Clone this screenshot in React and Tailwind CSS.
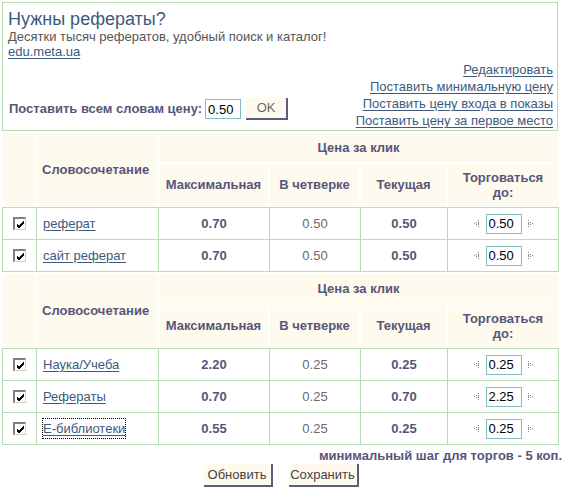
const green = "border-[#b7dbb7]";

function Check() {
  return (
    <span className="inline-flex h-[13px] w-[13px] items-center justify-center border-t-2 border-l-2 border-b border-r border-t-[#808080] border-l-[#808080] border-b-[#d4d0c8] border-r-[#d4d0c8] bg-white">
      <svg width="9" height="9" viewBox="0 0 9 9">
        <path d="M1 4 L3 6 L8 1 M1 5 L3 7 L8 2 M1 6 L3 8 L8 3" stroke="#000" strokeWidth="1" fill="none" />
      </svg>
    </span>
  );
}

function Arrow({ dir }) {
  const dots =
    dir === "left"
      ? [[5, 0], [3, 2], [5, 2], [1, 3], [5, 3], [3, 4], [5, 4], [5, 6]]
      : [[0, 0], [0, 2], [2, 2], [0, 3], [4, 3], [0, 4], [2, 4], [0, 6]];
  return (
    <svg width="6" height="7" viewBox="0 0 6 7">
      {dots.map(([x, y], i) => (
        <rect key={i} x={x} y={y} width="1" height="1" fill="#8a8aa8" />
      ))}
    </svg>
  );
}

function PriceBox({ value }) {
  return (
    <input
      defaultValue={value}
      className="h-[20px] w-[36px] border border-[#7fbfbf] bg-white px-[2px] text-[13px] text-black outline-none"
    />
  );
}

function HeaderCell({ children, className = "" }) {
  return (
    <div className={`flex items-center border border-white bg-[#fffaee] font-bold text-[#56567a] ${className}`}>
      {children}
    </div>
  );
}

function KeywordTable({ rows }) {
  return (
    <div className="ml-[2px] w-[557px]">
      <div className="grid grid-cols-[34px_122px_111px_91px_87px_112px] grid-rows-[31px_44px] bg-white pt-[1px]">
        <HeaderCell className="row-span-2" />
        <HeaderCell className="row-span-2 pl-[5px]">Словосочетание</HeaderCell>
        <HeaderCell className="col-span-4 justify-center">Цена за клик</HeaderCell>
        <HeaderCell className="justify-center">Максимальная</HeaderCell>
        <HeaderCell className="justify-center">В четверке</HeaderCell>
        <HeaderCell className="justify-center">Текущая</HeaderCell>
        <HeaderCell className="justify-center text-center leading-[15px]">
          Торговаться
          <br />
          до:
        </HeaderCell>
      </div>
      <div className={`border-b ${green}`}>
        {rows.map((r) => (
          <div key={r.word} className="grid h-[32px] grid-cols-[34px_122px_111px_91px_87px_112px]">
            <div className={`flex items-center justify-center border-t border-l ${green}`}>
              <Check />
            </div>
            <div className={`flex items-center border-t border-l pl-[6px] ${green}`}>
              <a
                href="#"
                className={`text-[#3c5a7d] underline underline-offset-2 ${r.focus ? "outline-1 outline-dotted outline-black" : ""}`}
              >
                {r.word}
              </a>
            </div>
            <div className={`flex items-center justify-center border-t border-l font-bold text-[#56567a] ${green}`}>
              {r.max}
            </div>
            <div className={`flex items-center justify-center border-t border-l text-[#6b6b6b] ${green}`}>
              {r.four}
            </div>
            <div className={`flex items-center justify-center border-t border-l font-bold text-[#56567a] ${green}`}>
              {r.cur}
            </div>
            <div className={`flex items-center justify-center border-t border-l border-r ${green}`}>
              <Arrow dir="left" />
              <span className="ml-[7px] mr-[6px]">
                <PriceBox value={r.bid} />
              </span>
              <Arrow dir="right" />
            </div>
          </div>
        ))}
      </div>
    </div>
  );
}

function OldButton({ children, className = "" }) {
  return (
    <button className={`border-r-2 border-b-2 border-[#5c5c7c] bg-[#fffaee] text-[13px] text-[#444] ${className}`}>
      {children}
    </button>
  );
}

export default function App() {
  const first = [
    { word: "реферат", max: "0.70", four: "0.50", cur: "0.50", bid: "0.50" },
    { word: "сайт реферат", max: "0.70", four: "0.50", cur: "0.50", bid: "0.50" },
  ];
  const second = [
    { word: "Наука/Учеба", max: "2.20", four: "0.25", cur: "0.25", bid: "0.25" },
    { word: "Рефераты", max: "0.70", four: "0.25", cur: "0.70", bid: "2.25" },
    { word: "Е-библиотеки", max: "0.55", four: "0.25", cur: "0.25", bid: "0.25", focus: true },
  ];

  return (
    <div className="w-[562px] bg-white pt-[2px] font-['Liberation_Sans',Arial,sans-serif] text-[13px] text-[#555]">
      <div className={`ml-[2px] flex h-[129px] w-[556px] flex-col border ${green} pl-[5px] pr-[4px]`}>
        <div className="mt-[6px] text-[18px] leading-[20px] text-[#3a5a7c]">Нужны рефераты?</div>
        <div className="leading-[15px]">Десятки тысяч рефератов, удобный поиск и каталог!</div>
        <a href="#" className="self-start leading-[15px] text-[#3c5a7d] underline underline-offset-2">
          edu.meta.ua
        </a>
        <div className="mt-auto mb-[1px] flex items-end justify-between">
          <div className="mb-[9px] flex items-center">
            <span className="ml-[1px] font-bold text-[#56567a]">Поставить всем словам цену:</span>
            <span className="ml-[3px]">
              <PriceBox value="0.50" />
            </span>
            <OldButton className="ml-[5px] h-[22px] w-[42px] text-[#666]">OK</OldButton>
          </div>
          <div className="flex flex-col items-end leading-[17px]">
            <a href="#" className="text-[#3c5a7d] underline underline-offset-2">Редактировать</a>
            <a href="#" className="text-[#3c5a7d] underline underline-offset-2">Поставить минимальную цену</a>
            <a href="#" className="text-[#3c5a7d] underline underline-offset-2">Поставить цену входа в показы</a>
            <a href="#" className="text-[#3c5a7d] underline underline-offset-2">Поставить цену за первое место</a>
          </div>
        </div>
      </div>

      <KeywordTable rows={first} />
      <KeywordTable rows={second} />

      <div className="mt-[3px] whitespace-nowrap text-right font-bold leading-[15px] text-[#56567a]">
        минимальный шаг для торгов - 5 коп.
      </div>
      <div className="mt-[1px] flex justify-center gap-[16px]">
        <OldButton className="h-[23px] w-[69px]">Обновить</OldButton>
        <OldButton className="h-[23px] w-[70px]">Сохранить</OldButton>
      </div>
    </div>
  );
}
